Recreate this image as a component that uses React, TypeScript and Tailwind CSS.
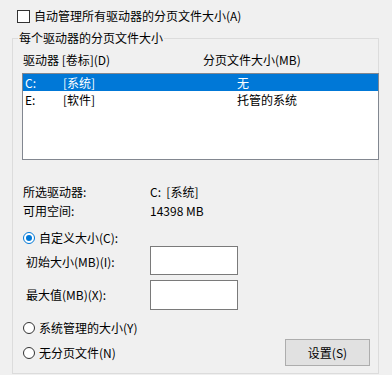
import React from 'react';

const font = { fontFamily: '"Noto Sans CJK SC", "Microsoft YaHei", sans-serif' };

const Radio: React.FC<{ checked?: boolean; label: string }> = ({ checked, label }) => (
  <div className="flex items-center h-[16px]">
    <span
      className={`w-[12px] h-[12px] rounded-full border flex items-center justify-center bg-white ${
        checked ? 'border-[#0078d7]' : 'border-[#333333]'
      }`}
    >
      {checked && <span className="w-[6px] h-[6px] rounded-full bg-[#0078d7]" />}
    </span>
    <span className="ml-[4px]">{label}</span>
  </div>
);

const drives = [
  { letter: 'C:', label: '[系统]', size: '无', selected: true },
  { letter: 'E:', label: '[软件]', size: '托管的系统', selected: false },
];

export default function App() {
  return (
    <div
      className="w-[392px] h-[375px] bg-[#f0f0f0] text-black text-[12px] leading-[16px] overflow-hidden"
      style={font}
    >
      {/* Auto-manage checkbox */}
      <div className="flex items-center pt-[8px] pl-[17px] h-[24px]">
        <span className="w-[13px] h-[13px] border border-[#333333] bg-white" />
        <span className="ml-[4px]">自动管理所有驱动器的分页文件大小(A)</span>
      </div>

      {/* Group box */}
      <div className="relative ml-[12px] mt-[14px] w-[367px] h-[336px] border border-[#dcdcdc]">
        <span className="absolute left-[5px] top-[-9px] px-[1px] bg-[#f0f0f0]">每个驱动器的分页文件大小</span>

        <div className="flex pl-[10px] mt-[13px] h-[16px]">
          <span className="w-[180px]">驱动器 [卷标](D)</span>
          <span>分页文件大小(MB)</span>
        </div>

        <div className="ml-[9px] mt-[5px] w-[357px] h-[87px] border border-[#828790] bg-white">
          {drives.map((d) => (
            <div
              key={d.letter}
              className={`flex items-center h-[17px] pl-[2px] ${d.selected ? 'bg-[#0078d7] text-white' : ''}`}
            >
              <span className="w-[38px]">{d.letter}</span>
              <span className="w-[174px]">{d.label}</span>
              <span>{d.size}</span>
            </div>
          ))}
        </div>

        {/* Selected drive info */}
        <div className="pl-[10px] mt-[24px] flex flex-col gap-[3px]">
          <div className="flex h-[16px]">
            <span className="w-[127px]">所选驱动器:</span>
            <span>C:&nbsp;&nbsp;[系统]</span>
          </div>
          <div className="flex h-[16px]">
            <span className="w-[127px]">可用空间:</span>
            <span>14398 MB</span>
          </div>
        </div>

        <div className="pl-[10px] mt-[11px]">
          <Radio checked label="自定义大小(C):" />
        </div>

        <div className="flex items-center pl-[13px] h-[29px] pt-[3px]">
          <span className="w-[124px]">初始大小(MB)(I):</span>
          <span className="w-[88px] h-[29px] -mt-[3px] border border-[#7a7a7a] bg-white" />
        </div>

        <div className="flex items-center pl-[13px] mt-[5px] h-[30px]">
          <span className="w-[124px]">最大值(MB)(X):</span>
          <span className="w-[88px] h-[30px] border border-[#7a7a7a] bg-white" />
        </div>

        <div className="pl-[10px] mt-[10px]">
          <Radio label="系统管理的大小(Y)" />
        </div>

        <div className="flex items-center justify-between pl-[10px] pr-[8px] mt-[3px] h-[27px]">
          <Radio label="无分页文件(N)" />
          <button className="w-[85px] h-[27px] bg-[#e1e1e1] border border-[#adadad]">设置(S)</button>
        </div>
      </div>
    </div>
  );
}
